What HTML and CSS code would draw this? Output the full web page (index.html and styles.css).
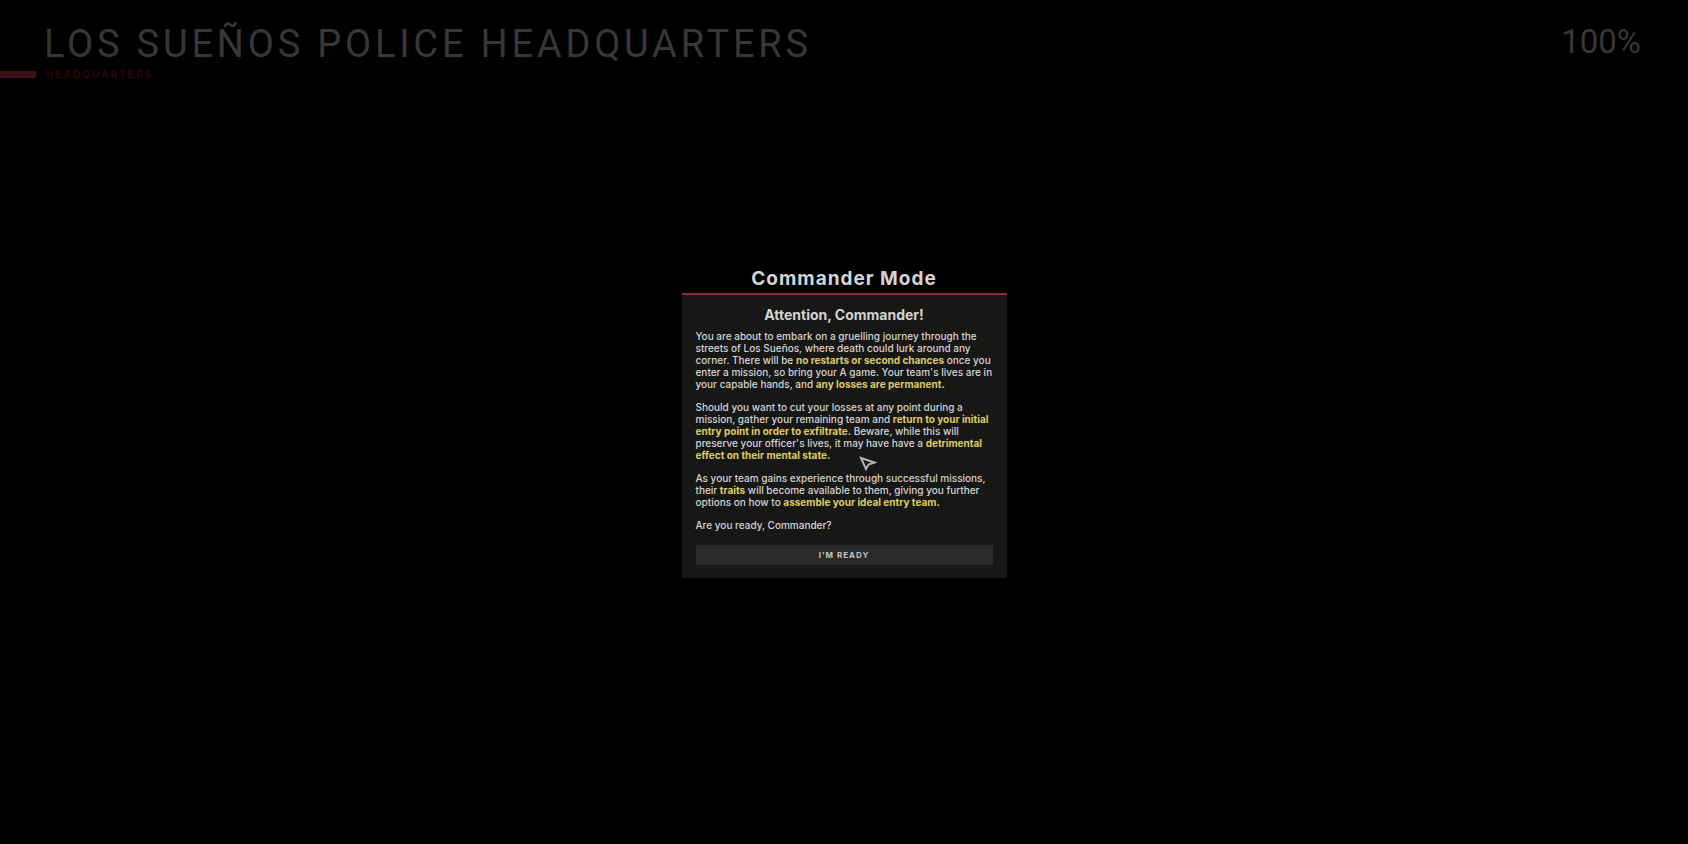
FILE: index.html
```html
<!DOCTYPE html>
<html lang="en">
<head>
<meta charset="utf-8">
<title>Commander Mode</title>
<link rel="stylesheet" href="styles.css">
</head>
<body>
<header class="topbar">
  <div class="place">
    <h1 class="place-name">LOS SUEÑOS POLICE HEADQUARTERS</h1>
    <p class="place-tag">HEADQUARTERS</p>
  </div>
  <p class="progress">100%</p>
</header>
<main class="stage">
  <section class="dialog" role="dialog" aria-labelledby="dialog-title">
    <h2 class="dialog-title" id="dialog-title">Commander Mode</h2>
    <div class="panel">
      <h3 class="panel-title">Attention, Commander!</h3>
      <div class="copy">
        <p>You are about to embark on a gruelling journey through the<br>streets of Los Sueños, where death could lurk around any<br>corner. There will be <strong>no restarts or second chances</strong> once you<br>enter a mission, so bring your A game. Your team's lives are in<br>your capable hands, and <strong>any losses are permanent.</strong></p>
        <p>Should you want to cut your losses at any point during a<br>mission, gather your remaining team and <strong>return to your initial<br>entry point in order to exfiltrate.</strong> Beware, while this will<br>preserve your officer's lives, it may have have a <strong>detrimental<br>effect on their mental state.</strong></p>
        <p>As your team gains experience through successful missions,<br>their <strong>traits</strong> will become available to them, giving you further<br>options on how to <strong>assemble your ideal entry team.</strong></p>
        <p>Are you ready, Commander?</p>
      </div>
      <button class="ready" type="button">I'M READY</button>
      <svg class="pointer" width="18" height="17" viewBox="0 0 18 17" aria-hidden="true">
        <path d="M2 2 15.500 6.500 9.500 8.500 7 13Z"/>
      </svg>
    </div>
  </section>
</main>
</body>
</html>
```

FILE: styles.css
```css
* {
  box-sizing: border-box;
}

body {
  display: grid;
  grid-template: 100vh / 100%;
  margin: 0;
  background: #000;
  color: #d4d4d2;
  font-family: Inter, "Liberation Sans", sans-serif;
}

h1, h2, h3, p {
  margin: 0;
}

.topbar,
.stage {
  grid-area: 1 / 1;
}

.topbar {
  display: flex;
  justify-content: space-between;
  align-items: flex-start;
  padding: 21px 47px 0 0;
  color: #373737;
  font-family: Roboto, "Liberation Sans", sans-serif;
}

.place-name {
  padding-left: 44px;
  font-size: 38px;
  font-weight: 400;
  line-height: 47px;
  letter-spacing: 0.1em;
}

.place-tag {
  display: flex;
  align-items: center;
  gap: 10px;
  color: #27070a;
  font-family: Inter, "Liberation Sans", sans-serif;
  font-size: 10px;
  font-weight: 700;
  line-height: 12px;
  letter-spacing: 2px;
}

.place-tag::before {
  content: "";
  width: 36px;
  height: 7px;
  background: #3d1015;
}

.progress {
  font-size: 33px;
  line-height: 42px;
}

.stage {
  display: flex;
  align-items: center;
  justify-content: center;
}

.dialog {
  width: 325px;
}

.dialog-title {
  padding-bottom: 2px;
  font-size: 19px;
  line-height: 24px;
  letter-spacing: 1px;
  text-align: center;
}

.panel {
  position: relative;
  padding: 12px 14px 13px;
  border-top: 2px solid #83323b;
  background: linear-gradient(#261516, #171716 6px);
}

.panel-title {
  margin-bottom: 7px;
  font-size: 14px;
  line-height: 16px;
  text-align: center;
}

.copy {
  display: grid;
  gap: 11px;
  padding-bottom: 7px;
  border-bottom: 1px solid #1c1c1b;
  font-size: 10px;
  font-weight: 500;
  line-height: 12px;
  white-space: nowrap;
}

.copy strong {
  color: #dfcb62;
  font-weight: 700;
}

.ready {
  display: block;
  width: 100%;
  margin-top: 6px;
  padding: 4px;
  border: 0;
  background: #2a2a29;
  color: #c4c4c2;
  font: 700 8px/12px Inter, "Liberation Sans", sans-serif;
  letter-spacing: 1px;
}

.pointer {
  position: absolute;
  top: 161px;
  left: 177px;
  fill: none;
  stroke: #b4b4b2;
  stroke-width: 2;
}
```
